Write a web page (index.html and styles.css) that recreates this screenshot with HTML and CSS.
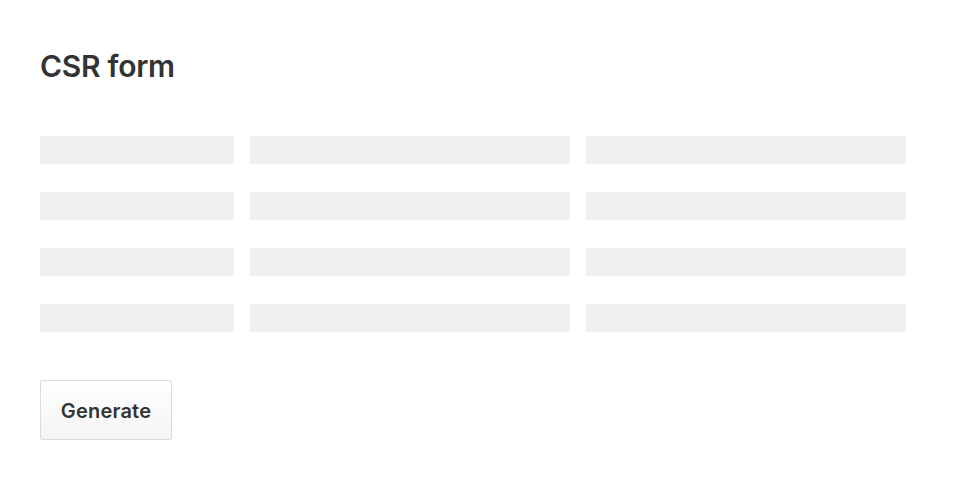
FILE: index.html
```html
<!DOCTYPE html>
<html>
<head>
<meta charset="utf-8">
<link rel="stylesheet" href="styles.css">
</head>
<body>
<main class="page">
  <h1 class="title">CSR form</h1>
  <div class="grid">
    <div class="field small"></div><div class="field"></div><div class="field"></div>
    <div class="field small"></div><div class="field"></div><div class="field"></div>
    <div class="field small"></div><div class="field"></div><div class="field"></div>
    <div class="field small"></div><div class="field"></div><div class="field"></div>
  </div>
  <button class="btn" type="button">Generate</button>
</main>
</body>
</html>
```
FILE: styles.css
```css
html, body { margin: 0; padding: 0; background: #fff; }
body { font-family: Inter, "Noto Sans", sans-serif; color: #333; }
.page { padding: 40px; }
.title {
  margin: 0;
  font-size: 30px;
  font-weight: 600;
  line-height: 52px;
  letter-spacing: -0.3px;
  color: #333;
}
.grid {
  margin-top: 44px;
  display: grid;
  grid-template-columns: 194px 320px 320px;
  column-gap: 16px;
  row-gap: 28px;
}
.field { height: 28px; background: #f0f0f0; }
.btn {
  margin-top: 48px;
  width: 132px;
  height: 60px;
  border: 1px solid #dcdcdc;
  border-radius: 2px;
  background: linear-gradient(#ffffff, #f4f4f4);
  font-family: Inter, "Noto Sans", sans-serif;
  font-size: 20px;
  font-weight: 600;
  letter-spacing: 0.2px;
  line-height: 1;
  padding: 2px 0 0;
  color: #333;
}
```
